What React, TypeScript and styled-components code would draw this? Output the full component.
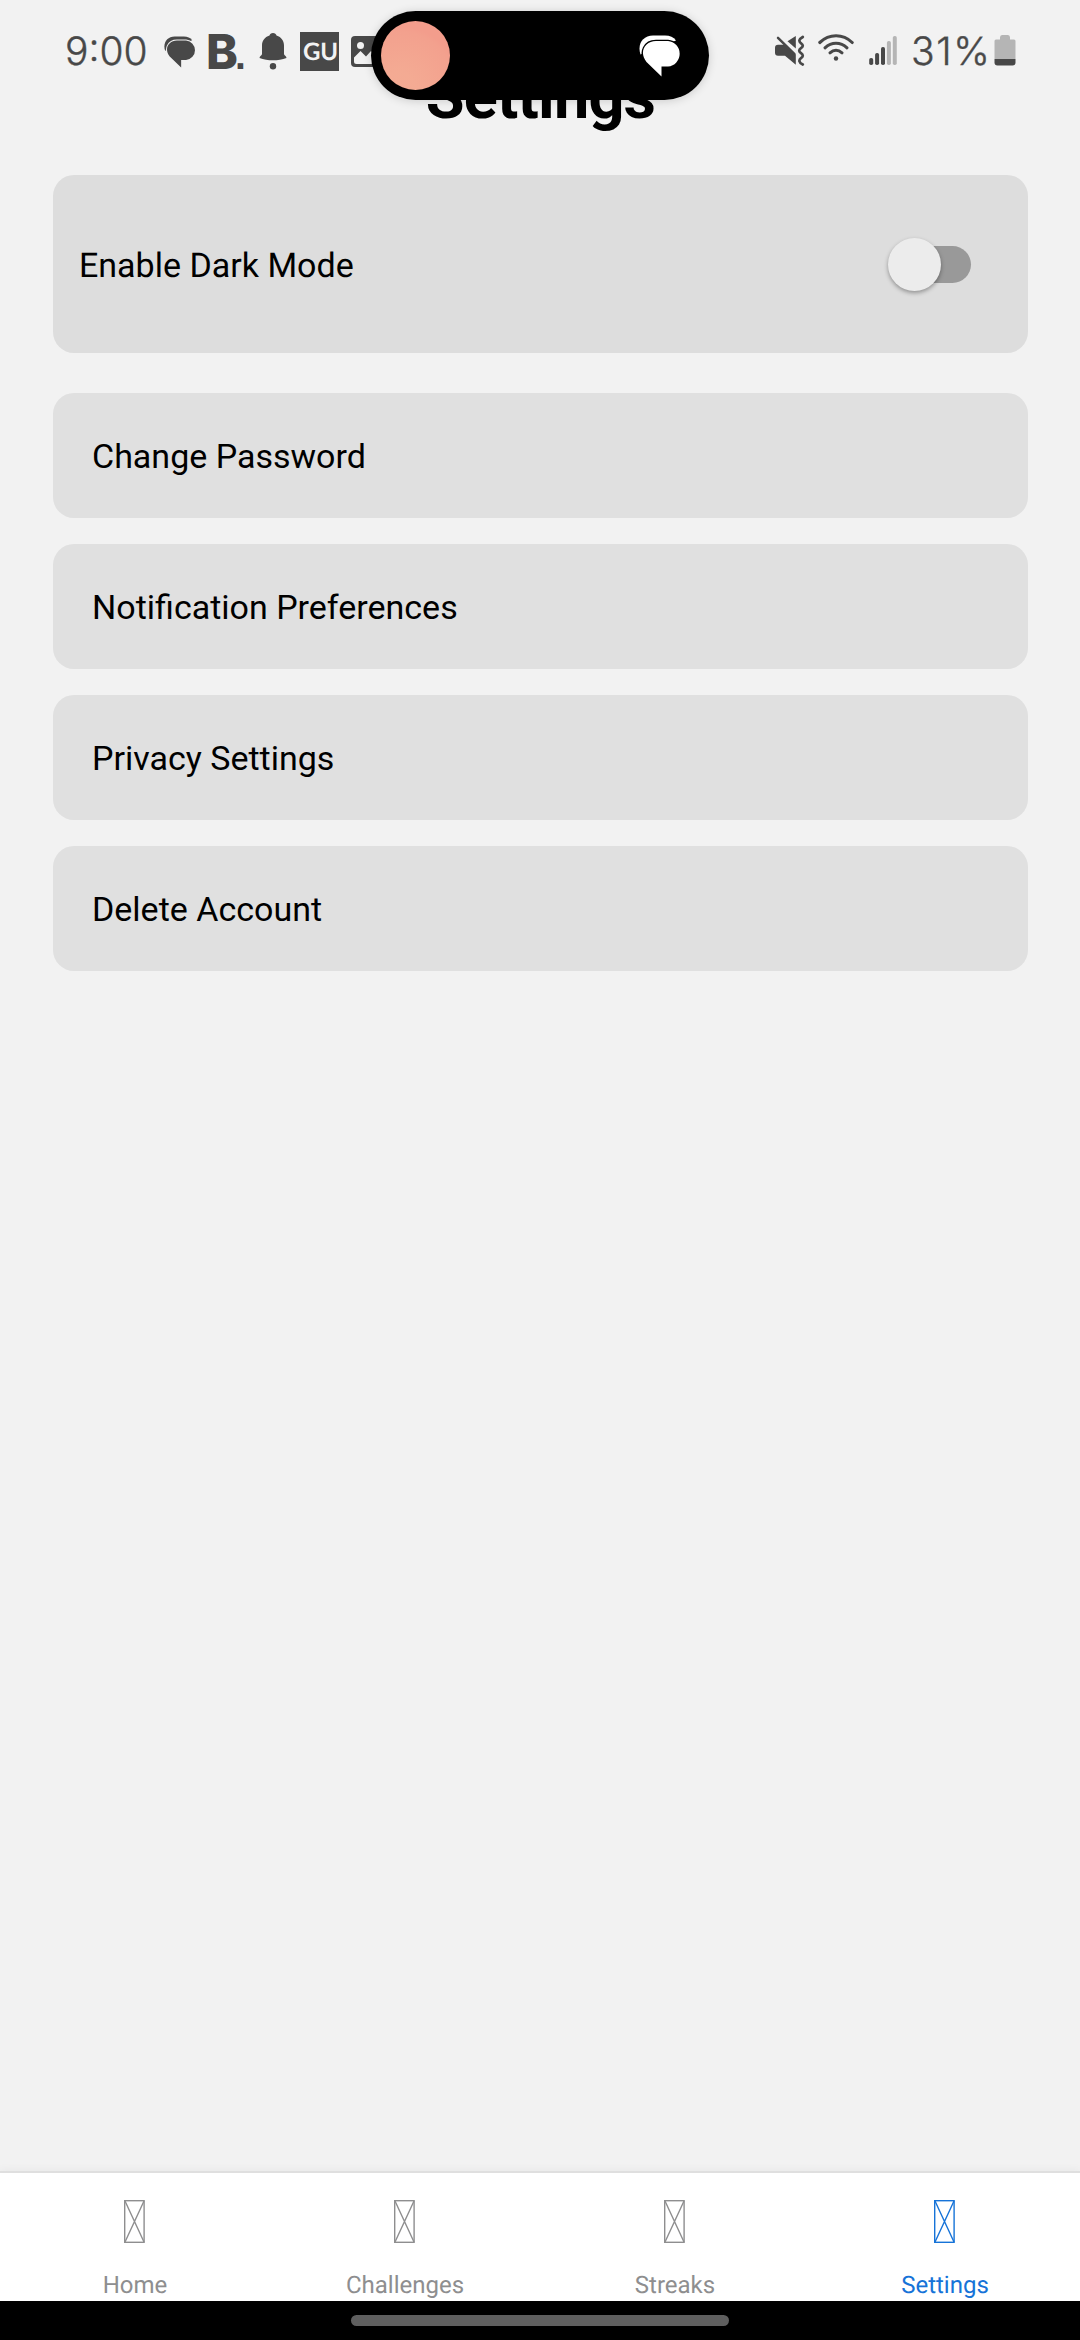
import React from "react";
import styled, { createGlobalStyle } from "styled-components";

const INK = "#484848";
const FAINT = "#b5b5b5";

const GlobalStyle = createGlobalStyle`
  *, *::before, *::after { box-sizing: border-box; }
  html, body { margin: 0; padding: 0; background: #f2f2f2; }
  body {
    font-family: Roboto, "Noto Sans", sans-serif;
    color: #000;
    text-rendering: geometricPrecision;
  }
  button { border: 0; margin: 0; font: inherit; color: inherit; text-align: left; }
`;

const Phone = styled.div`
  position: relative;
  display: flex;
  flex-direction: column;
  width: 1080px;
  height: 2340px;
  overflow: hidden;
  background: #f2f2f2;
`;

const StatusBar = styled.div`
  position: absolute;
  inset: 0 0 auto 0;
  display: flex;
  justify-content: space-between;
  align-items: flex-start;
  height: 104px;
  padding: 31px 64px 0 65px;
  color: ${INK};
`;

const StatusGroup = styled.div`
  display: flex;
  align-items: center;
  height: 41px;
`;

const Glyph = styled.svg<{ $left?: number; $lift?: number }>`
  display: block;
  flex: none;
  margin-left: ${(p) => p.$left ?? 0}px;
  margin-bottom: ${(p) => p.$lift ?? 0}px;
`;

const StatusText = styled.span<{ $width: number; $left?: number; $spacing?: number }>`
  flex: none;
  width: ${(p) => p.$width}px;
  margin-left: ${(p) => p.$left ?? 0}px;
  font-family: Inter, sans-serif;
  font-size: 39px;
  font-weight: 350;
  line-height: 40px;
  letter-spacing: ${(p) => p.$spacing ?? 0}px;
  white-space: nowrap;
  -webkit-text-stroke: 0.4px ${INK};
`;

const LetterMark = styled.span`
  display: flex;
  flex: none;
  align-items: baseline;
  width: 40px;
  margin-left: 10px;
  padding-top: 6px;
  font-family: Inter, sans-serif;
  font-size: 48px;
  font-weight: 800;
  line-height: 40px;
  white-space: nowrap;
`;

const LetterDot = styled.span`
  margin-left: -3px;
  font-family: "Liberation Sans", sans-serif;
  font-size: 39px;
  font-weight: 700;
  line-height: 40px;
`;

const SquareMark = styled.span`
  display: flex;
  flex: none;
  align-items: center;
  justify-content: center;
  width: 39px;
  height: 39px;
  margin-left: 13px;
  padding-left: 2px;
  background: ${INK};
  color: #f2f2f2;
  font-family: Lato, sans-serif;
  font-size: 24px;
  font-weight: 700;
`;

const Island = styled.div`
  position: absolute;
  top: 11px;
  left: 371px;
  display: flex;
  align-items: center;
  justify-content: space-between;
  width: 338px;
  height: 89px;
  padding: 0 28px 0 10px;
  border-radius: 45px;
  background: #000;
  box-shadow: 0 1px 10px rgba(0, 0, 0, 0.16);
`;

const Avatar = styled.div`
  width: 69px;
  height: 69px;
  border-radius: 50%;
  background:
    radial-gradient(circle at 25% 100%, rgba(244, 172, 148, 0.9) 0 20%, rgba(243, 163, 143, 0.6) 68%, transparent 74%),
    #f39d8c;
`;

const Content = styled.main`
  display: flex;
  flex: 1;
  flex-direction: column;
  padding: 61px 52px 0 53px;
`;

const Title = styled.h1`
  margin: 0 0 40px;
  font-size: 63px;
  font-weight: 700;
  line-height: 74px;
  letter-spacing: -0.8px;
  text-align: center;
`;

const ToggleCard = styled.section`
  display: flex;
  align-items: center;
  justify-content: space-between;
  height: 178px;
  margin-bottom: 40px;
  padding: 0 57px 0 26px;
  border-radius: 21px;
  background: #ddd;
`;

const ToggleLabel = styled.span`
  padding-top: 3px;
  font-size: 34px;
  line-height: 40px;
`;

const Switch = styled.button`
  display: flex;
  align-items: center;
  width: 83px;
  height: 53px;
  padding: 0 0 0 9px;
  background: none;
`;

const Track = styled.span`
  display: flex;
  align-items: center;
  width: 74px;
  height: 37px;
  border-radius: 19px;
  background: #999;
`;

const Thumb = styled.span`
  flex: none;
  width: 53px;
  height: 53px;
  margin-left: -9px;
  border-radius: 50%;
  background: #ececec;
  box-shadow: 0 2px 4px rgba(0, 0, 0, 0.34);
`;

const Options = styled.div`
  display: flex;
  flex-direction: column;
  gap: 26px;
`;

const Option = styled.button`
  height: 125px;
  padding: 0 39px;
  border-radius: 21px;
  background: #e0e0e0;
  font-size: 34px;
`;

const TabBar = styled.nav`
  display: grid;
  flex: none;
  grid-template-columns: repeat(4, 1fr);
  height: 130px;
  border-top: 2px solid #dfdfdf;
  background: #fff;
  box-shadow: 0 -2px 8px rgba(0, 0, 0, 0.04);
`;

const Tab = styled.a<{ $active?: boolean }>`
  display: flex;
  flex-direction: column;
  align-items: center;
  gap: 28px;
  padding-top: 27px;
  color: ${(p) => (p.$active ? "#1673d8" : "#8e8e8f")};
  font-size: 24px;
  line-height: 28px;
`;

const GestureBar = styled.footer`
  display: flex;
  flex: none;
  justify-content: center;
  height: 39px;
  padding-top: 14px;
  background: #000;
`;

const Handle = styled.div`
  width: 378px;
  height: 11px;
  border-radius: 6px;
  background: #5f5f5f;
`;

function ChatIcon({ size, color, gap }: { size: number; color: string; gap: string }) {
  return (
    <Glyph width={size} height={size} viewBox="0 0 42 42" fill={color}>
      <path d="M1.500 19.500C-2 9 4 .5 14 .5h12c5 0 8.500 1.500 11 5z" />
      <path d="M17 6h12a12.800 12.800 0 0 1 0 25.500h-6.500v10L7.500 27C-.5 17 6 6 17 6Z" stroke={gap} strokeWidth="2.600" />
      <path d="M17 6h12a12.800 12.800 0 0 1 0 25.500h-6.500v10L7.500 27C-.5 17 6 6 17 6Z" />
    </Glyph>
  );
}

function BellIcon() {
  return (
    <Glyph $left={13} width="28" height="37" viewBox="0 0 28 37" fill={INK}>
      <path d="M14 0c2 0 3 1 3.500 2.500C22.500 4 25 8 25 12.500V21c0 1.500 2.500 2 2.500 4-4 1.700-9 2.300-13.500 2.300S4.500 26.700.5 25c0-2 2.500-2.500 2.500-4v-8.500C3 8 5.500 4 10.500 2.500 11 1 12 0 14 0Z" />
      <circle cx="14" cy="33.300" r="3.200" />
    </Glyph>
  );
}

function PictureIcon() {
  return (
    <Glyph $left={12} width="31" height="31" viewBox="0 0 31 31">
      <rect width="31" height="31" rx="4" fill={INK} />
      <circle cx="9.500" cy="9.500" r="3.500" fill="#f2f2f2" />
      <path d="M3 21.500 9.500 15l5.500 5.500 5-5.500 8 8v5H5.500A2.500 2.500 0 0 1 3 25.500Z" fill="#f2f2f2" />
    </Glyph>
  );
}

function MuteIcon() {
  return (
    <Glyph $lift={2} width="30" height="31" viewBox="0 0 30 31" fill={INK}>
      <path d="M3 9.800h6.500L20.800 20v9.800L10 20.800H3a3 3 0 0 1-3-3v-5a3 3 0 0 1 3-3Z" />
      <path d="M20.800 1v12.500L12.500 6.300Z" />
      <path d="m3 2.800 16.500 16.400" fill="none" stroke={INK} strokeWidth="2.500" strokeLinecap="round" />
      <path d="M27.800 2c-4.200 2.500-4.200 4.200-1.800 6.200s2.400 3.300 0 5-2.400 3.300 0 5 2.400 3.300 0 5-2.400 4.300 1.800 6.300" fill="none" stroke={INK} strokeWidth="2.700" strokeLinecap="round" />
    </Glyph>
  );
}

function WifiIcon() {
  return (
    <Glyph $left={13} $lift={3} width="36" height="32" viewBox="0 0 36 32" fill="none" stroke={INK} strokeWidth="3.100" strokeLinecap="round">
      <path d="M1.800 8.500c9.500-9 23-9 32.400 0" />
      <path d="M7 13.800c6.500-6 15.500-6 22 0" />
      <path d="M12 18.800c3.700-3.200 8.300-3.200 12 0" />
      <circle cx="18" cy="24.500" r="2.200" fill={INK} stroke="none" />
    </Glyph>
  );
}

const signalBars = [
  { height: 7, color: INK },
  { height: 12, color: INK },
  { height: 18, color: INK },
  { height: 24, color: FAINT },
  { height: 29, color: FAINT },
];

function SignalIcon() {
  return (
    <Glyph $left={15} $lift={2} width="29" height="29" viewBox="0 0 29 29">
      {signalBars.map((bar, i) => (
        <rect key={i} x={0.2 + i * 5.9} y={29 - bar.height} width="4" height={bar.height} rx="1.800" fill={bar.color} />
      ))}
    </Glyph>
  );
}

function BatteryIcon() {
  return (
    <Glyph $lift={2} width="22" height="31" viewBox="0 0 22 31">
      <path d="M6 4.500V2.500Q6 0 8 0h6q2 0 2 2.500v2h4q1.500 0 1.500 1.500v18H.5V6Q.5 4.500 2 4.500Z" fill={FAINT} />
      <path d="M.5 24h21v3.500q0 3-3 3H3.500q-3 0-3-3Z" fill={INK} />
    </Glyph>
  );
}

function MissingIcon() {
  return (
    <Glyph width="22" height="43" viewBox="0 0 22 43" fill="none" stroke="currentColor" strokeWidth="1.400">
      <rect x=".7" y=".7" width="19.400" height="41.600" />
      <path d="m1 1 19 41M20 1 1 42" />
    </Glyph>
  );
}

const options = ["Change Password", "Notification Preferences", "Privacy Settings", "Delete Account"];
const tabs = ["Home", "Challenges", "Streaks", "Settings"];

export default function App() {
  return (
    <Phone>
      <GlobalStyle />
      <Content>
        <Title>Settings</Title>
        <ToggleCard>
          <ToggleLabel>Enable Dark Mode</ToggleLabel>
          <Switch role="switch" aria-checked={false}>
            <Track>
              <Thumb />
            </Track>
          </Switch>
        </ToggleCard>
        <Options>
          {options.map((label) => (
            <Option key={label}>{label}</Option>
          ))}
        </Options>
      </Content>
      <TabBar>
        {tabs.map((label) => (
          <Tab key={label} $active={label === "Settings"}>
            <MissingIcon />
            {label}
          </Tab>
        ))}
      </TabBar>
      <GestureBar>
        <Handle />
      </GestureBar>
      <StatusBar>
        <StatusGroup>
          <StatusText $width={99}>9:00</StatusText>
          <ChatIcon size={32} color={INK} gap="#f2f2f2" />
          <LetterMark>
            B<LetterDot>.</LetterDot>
          </LetterMark>
          <BellIcon />
          <SquareMark>GU</SquareMark>
          <PictureIcon />
        </StatusGroup>
        <StatusGroup>
          <MuteIcon />
          <WifiIcon />
          <SignalIcon />
          <StatusText $left={13} $width={83} $spacing={1.6}>
            31%
          </StatusText>
          <BatteryIcon />
        </StatusGroup>
      </StatusBar>
      <Island>
        <Avatar />
        <ChatIcon size={42} color="#fff" gap="#000" />
      </Island>
    </Phone>
  );
}
